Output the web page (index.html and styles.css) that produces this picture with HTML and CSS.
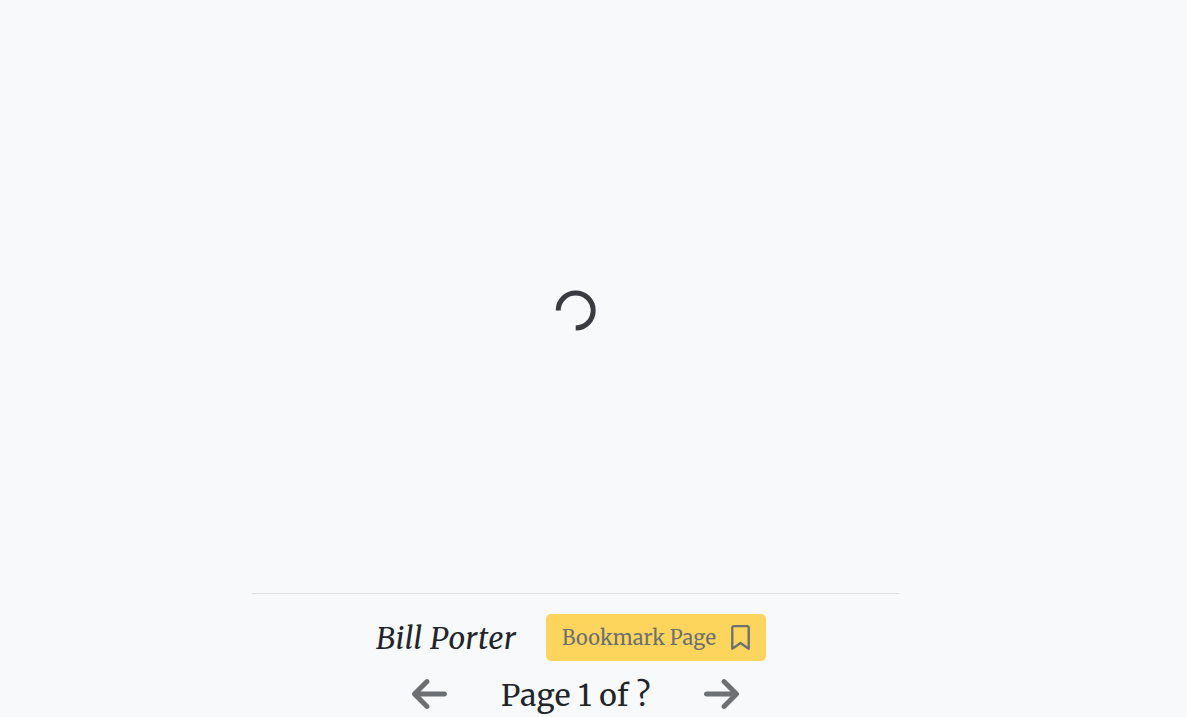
FILE: index.html
```html
<!DOCTYPE html>
<html lang="en">
<head>
<meta charset="utf-8">
<title>Reader</title>
<link rel="stylesheet" href="styles.css">
</head>
<body>
<main class="reader">
  <section class="page-area">
    <svg class="spinner" viewBox="0 0 41 41" role="img" aria-label="Loading"><path d="M3.200 20.500a17.500 17.500 0 1 1 17.500 17.500"/></svg>
  </section>
  <footer class="controls">
    <div class="title-row">
      <span class="title">Bill Porter</span>
      <button class="bookmark" type="button">
        <span class="bookmark-label">Bookmark Page</span>
        <svg class="bookmark-icon" viewBox="0 0 384 512"><path d="M0 48C0 21.500 21.500 0 48 0l0 48 0 393.400 130.100-92.900c8.300-6 19.600-6 27.900 0L336 441.400 336 48 48 48 48 0 336 0c26.500 0 48 21.500 48 48l0 440c0 9-5 17.200-13 21.300s-17.600 3.400-24.900-1.800L192 397.500 37.900 507.500c-7.300 5.200-16.900 5.900-24.900 1.800S0 497 0 488L0 48z"/></svg>
      </button>
    </div>
    <div class="pager">
      <svg class="arrow" viewBox="0 0 448 512"><path d="M9.400 233.400c-12.500 12.500-12.500 32.800 0 45.300l160 160c12.500 12.500 32.800 12.500 45.300 0s12.500-32.800 0-45.300L109.200 288 416 288c17.700 0 32-14.300 32-32s-14.300-32-32-32l-306.700 0L214.600 118.600c12.500-12.500 12.500-32.800 0-45.300s-32.800-12.500-45.300 0l-160 160z"/></svg>
      <span class="page-label">Page 1 of ?</span>
      <svg class="arrow next" viewBox="0 0 448 512"><path d="M9.400 233.400c-12.500 12.500-12.500 32.800 0 45.300l160 160c12.500 12.500 32.800 12.500 45.300 0s12.500-32.800 0-45.300L109.200 288 416 288c17.700 0 32-14.300 32-32s-14.300-32-32-32l-306.700 0L214.600 118.600c12.500-12.500 12.500-32.800 0-45.300s-32.800-12.500-45.300 0l-160 160z"/></svg>
    </div>
  </footer>
</main>
</body>
</html>
```
FILE: styles.css
```css
* { box-sizing: border-box; }
body {
  margin: 0;
  height: 717px;
  overflow: hidden;
  background: #f8f9fb;
  color: #212529;
  font-family: Merriweather, "DejaVu Serif Condensed", "DejaVu Serif", serif;
}
svg { display: block; flex: none; }
span { white-space: nowrap; }
.reader { width: 647px; margin-left: 252px; }
.page-area {
  height: 594px;
  padding: 290px 0 0 303px;
  border-bottom: 1px solid #dee0e2;
}
.spinner { width: 41px; height: 41px; fill: none; stroke: #383c41; stroke-width: 5; }
.controls { padding-top: 20px; }
.title-row { display: flex; align-items: center; height: 47px; padding-left: 124px; }
.title { width: 170px; font-size: 30px; font-style: italic; letter-spacing: .4px; }
.bookmark {
  display: flex;
  align-items: center;
  width: 220px;
  height: 47px;
  padding: 0 0 0 16px;
  border: 0;
  border-radius: 5px;
  background: #fdd55c;
  color: #6d7072;
  font: inherit;
  font-size: 20px;
}
.bookmark-label { width: 168.500px; text-align: left; letter-spacing: .12px; }
.bookmark-icon { width: 19px; height: 25px; fill: currentColor; }
.pager { display: flex; align-items: center; height: 46px; margin-top: 10px; padding-left: 160px; }
.arrow { width: 35px; height: 40px; fill: #6d7072; }
.page-label { width: 203px; margin-left: 54px; padding-top: 2px; font-size: 30px; letter-spacing: .3px; }
.next { transform: scaleX(-1); }
```
